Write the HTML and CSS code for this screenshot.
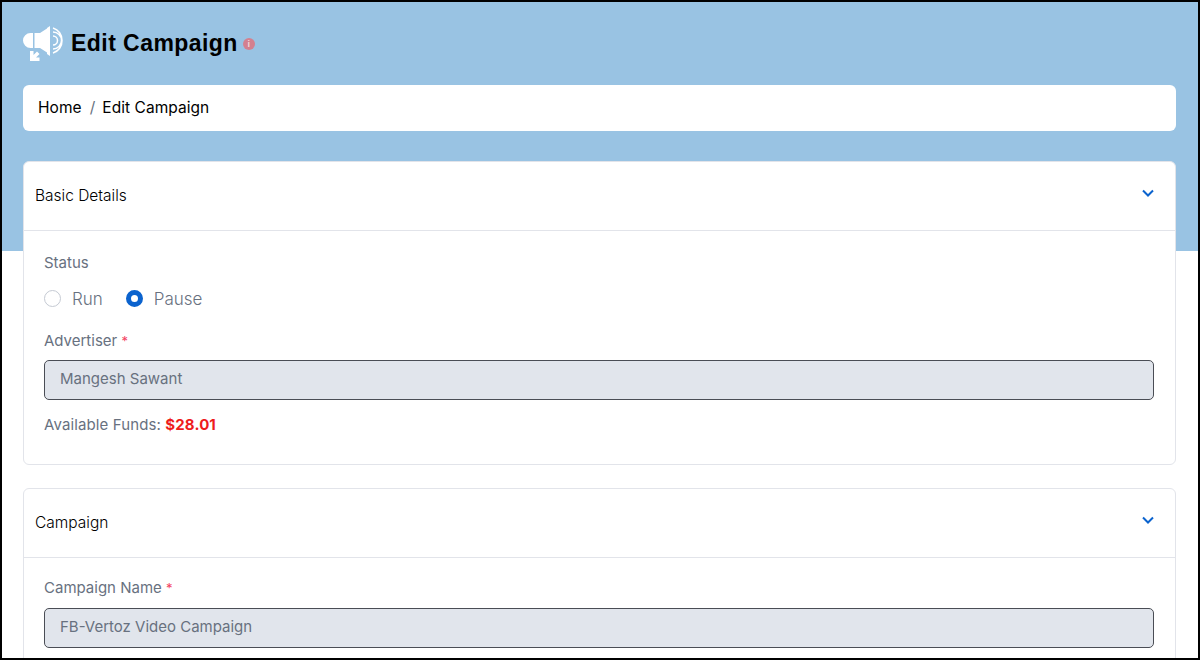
FILE: index.html
```html
<!DOCTYPE html>
<html lang="en">
<head>
    <meta charset="UTF-8">
    <title>Edit Campaign</title>
    <link rel="stylesheet" href="styles.css">
</head>
<body>
    <div class="page">
        <header class="page-title">
            <svg class="title-icon" width="41" height="38" viewBox="0 0 41 38">
                <path d="M7.500 8H10v15H7.500a7.500 7.500 0 0 1 0-15z" fill="#fff"/>
                <path d="M11.500 8H17l7-4.500v24L17 23h-5.500z" fill="#fff"/>
                <path d="M24 3l3-2v30l-3-2z" fill="#fff"/>
                <path d="M7 26h3.500v4l3.500-3.500 2.500 2.500-3.500 3.500h3.500V36H7z" fill="#fff"/>
                <path d="M30 11a4.500 4.500 0 0 1 0 9M30 7a8.500 8.500 0 0 1 0 17M30 3a12.500 12.500 0 0 1 9 12.500 12.500 12.500 0 0 1-9 12.500" fill="none" stroke="#fff" stroke-width="1.500"/>
            </svg>
            <h1>Edit Campaign</h1>
            <span class="info-dot">i</span>
        </header>

        <nav class="breadcrumb">
            <a>Home</a>
            <span class="sep">/</span>
            <a>Edit Campaign</a>
        </nav>

        <section class="card">
            <div class="card-head">
                <span>Basic Details</span>
                <svg class="chevron" width="12" height="8" viewBox="0 0 12 8"><path d="M1 1.500l5 5 5-5" fill="none" stroke="#0b63ce" stroke-width="2"/></svg>
            </div>
            <div class="card-body">
                <label class="field-label">Status</label>
                <div class="radios">
                    <span class="radio"></span><span class="radio-text">Run</span>
                    <span class="radio checked"></span><span class="radio-text">Pause</span>
                </div>
                <label class="field-label">Advertiser <b class="req">*</b></label>
                <div class="input">Mangesh Sawant</div>
                <p class="funds">Available Funds: <b>$28.01</b></p>
            </div>
        </section>

        <section class="card">
            <div class="card-head">
                <span>Campaign</span>
                <svg class="chevron" width="12" height="8" viewBox="0 0 12 8"><path d="M1 1.500l5 5 5-5" fill="none" stroke="#0b63ce" stroke-width="2"/></svg>
            </div>
            <div class="card-body card-body-tight">
                <label class="field-label">Campaign Name <b class="req">*</b></label>
                <div class="input">FB-Vertoz Video Campaign</div>
            </div>
        </section>
    </div>
</body>
</html>
```

FILE: styles.css
```css
html, body {
    margin: 0;
    height: 100%;
    overflow: hidden;
}

body {
    font-family: "Inter", "Liberation Sans", sans-serif;
    color: #68717f;
}

.page {
    box-sizing: border-box;
    height: 660px;
    padding: 0 22px 0 21px;
    border: 2px solid #000;
    overflow: hidden;
    background: linear-gradient(#99c3e3 249px, #fff 249px);
}

.page-title {
    display: flex;
    align-items: center;
    height: 83px;
}

.title-icon {
    margin-right: 7px;
    margin-top: 1px;
}

h1 {
    margin: 0 0 2px;
    font: bold 23px/28px "Liberation Sans", sans-serif;
    color: #000;
    letter-spacing: 0.45px;
}

.info-dot {
    width: 12px;
    height: 12px;
    margin-left: 5px;
    border-radius: 50%;
    background: #d4808f;
    color: #f3d5da;
    font: bold 9px/12px "Liberation Sans", sans-serif;
    text-align: center;
}

.breadcrumb {
    display: flex;
    align-items: center;
    box-sizing: border-box;
    height: 46px;
    padding: 0 15px 2px;
    margin-bottom: 30px;
    border-radius: 6px;
    background: #fff;
    font-size: 15.500px;
    letter-spacing: 0.05px;
    color: #000;
}

.sep {
    margin: 0 7px 0 8px;
    color: #68717f;
}

.card {
    margin-bottom: 23px;
    border: 1px solid #e2e4ea;
    border-radius: 6px;
    background: #fff;
}

.card-head {
    display: flex;
    align-items: center;
    justify-content: space-between;
    box-sizing: border-box;
    height: 69px;
    padding: 0 21px 2px 11px;
    border-bottom: 1px solid #e2e4ea;
    font-size: 15.500px;
    font-weight: 300;
    color: #000;
}

.chevron {
    margin-bottom: 4px;
}

.card-body {
    padding: 23px 21px 29px 20px;
}

.card-body-tight {
    padding-top: 21px;
}

.field-label {
    display: block;
    font-size: 15px;
    line-height: 18px;
}

.radios {
    display: flex;
    align-items: center;
    height: 26px;
    margin: 14px 0 20px;
    font-size: 17px;
    font-weight: 300;
}

.radio {
    box-sizing: border-box;
    width: 17px;
    height: 17px;
    margin-top: -2px;
    border: 1px solid #c5cad3;
    border-radius: 50%;
}

.radio.checked {
    border: 5px solid #0b63ce;
}

.radio-text {
    margin: 0 23px 0 11px;
}

.req {
    color: #f3415f;
    font-size: 13px;
    font-weight: normal;
}

.input {
    box-sizing: border-box;
    height: 40px;
    margin-top: 10px;
    padding: 0 15px;
    border: 1px solid #4a4d55;
    border-radius: 5px;
    background: #e1e5ec;
    font-size: 15px;
    line-height: 36px;
}

.card-body-tight .input {
    margin-top: 11px;
}

.funds {
    margin: 15px 0 0;
    font-size: 15px;
    line-height: 20px;
    letter-spacing: 0.12px;
}

.funds b {
    color: #ee1c1c;
}
```
